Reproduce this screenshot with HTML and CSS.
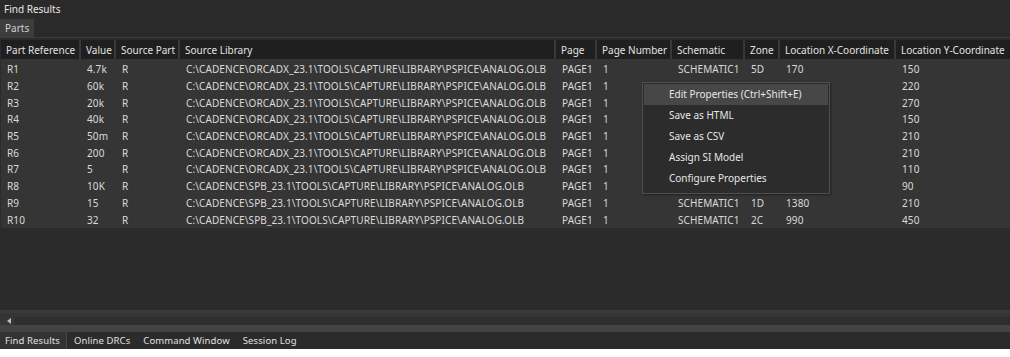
FILE: index.html
```html
<!DOCTYPE html>
<html lang="en">
<head>
    <meta charset="UTF-8">
    <title>Find Results</title>
    <link rel="stylesheet" href="styles.css">
</head>
<body>
    <div class="panel">
        <div class="title">Find Results</div>
        <div class="tabs">
            <div class="tab active">Parts</div>
        </div>
        <div class="grid-area">
            <table class="results">
                <colgroup>
                    <col style="width: 80px">
                    <col style="width: 35px">
                    <col style="width: 64px">
                    <col style="width: 376px">
                    <col style="width: 41px">
                    <col style="width: 75px">
                    <col style="width: 73px">
                    <col style="width: 35px">
                    <col style="width: 116px">
                    <col style="width: 114px">
                </colgroup>
                <thead>
                    <tr>
                        <th>Part Reference</th>
                        <th>Value</th>
                        <th>Source Part</th>
                        <th>Source Library</th>
                        <th>Page</th>
                        <th>Page Number</th>
                        <th>Schematic</th>
                        <th>Zone</th>
                        <th>Location X-Coordinate</th>
                        <th>Location Y-Coordinate</th>
                    </tr>
                </thead>
                <tbody id="rows"></tbody>
            </table>

            <div class="menu">
                <div class="item selected">Edit Properties (Ctrl+Shift+E)</div>
                <div class="item">Save as HTML</div>
                <div class="item">Save as CSV</div>
                <div class="item">Assign SI Model</div>
                <div class="item">Configure Properties</div>
            </div>
        </div>
        <div class="hscroll">
            <span class="arrow"></span>
            <div class="track"></div>
        </div>
        <div class="divider"></div>
        <div class="bottom-tabs">
            <div class="btab active">Find Results</div>
            <div class="btab">Online DRCs</div>
            <div class="btab">Command Window</div>
            <div class="btab">Session Log</div>
        </div>
    </div>

    <script>
        // rows of the Parts grid
        const orcad = 'C:\\CADENCE\\ORCADX_23.1\\TOOLS\\CAPTURE\\LIBRARY\\PSPICE\\ANALOG.OLB';
        const spb = 'C:\\CADENCE\\SPB_23.1\\TOOLS\\CAPTURE\\LIBRARY\\PSPICE\\ANALOG.OLB';
        const parts = [
            ['R1', '4.7k', orcad, 'SCHEMATIC1', '5D', '170', '150'],
            ['R2', '60k', orcad, '', '', '', '220'],
            ['R3', '20k', orcad, '', '', '', '270'],
            ['R4', '40k', orcad, '', '', '', '150'],
            ['R5', '50m', orcad, '', '', '', '210'],
            ['R6', '200', orcad, '', '', '', '210'],
            ['R7', '5', orcad, '', '', '', '110'],
            ['R8', '10K', spb, '', '', '', '90'],
            ['R9', '15', spb, 'SCHEMATIC1', '1D', '1380', '210'],
            ['R10', '32', spb, 'SCHEMATIC1', '2C', '990', '450']
        ];

        const tbody = document.getElementById('rows');
        parts.forEach(p => {
            const cells = [p[0], p[1], 'R', p[2], 'PAGE1', '1', p[3], p[4], p[5], p[6]];
            const tr = document.createElement('tr');
            cells.forEach(text => {
                const td = document.createElement('td');
                td.textContent = text;
                tr.appendChild(td);
            });
            tbody.appendChild(tr);
        });
    </script>
</body>
</html>
```

FILE: styles.css
```css
body {
    margin: 0;
    background: #ffffff;
    font-family: 'Noto Sans', sans-serif;
    font-size: 10px;
    color: #dcdcdc;
}
.panel {
    width: 1010px;
    height: 349px;
    background: #2e2e2e;
    display: flex;
    flex-direction: column;
}
.title {
    height: 19px;
    line-height: 19px;
    padding-left: 4px;
    background: #2a2a2a;
    color: #e6e6e6;
}
.tabs {
    display: flex;
    height: 18px;
    background: #2a2a2a;
}
.tab {
    padding: 0 5px;
    line-height: 18px;
    color: #d0d0d0;
}
.tab.active {
    background: #3d3d3d;
}
.grid-area {
    position: relative;
    flex: 1;
    background: #2b2b2b;
    padding: 2px 0 0 1px;
    border-top: 1px solid #3d3d3d;
}
.results {
    border-collapse: separate;
    border-spacing: 0;
    table-layout: fixed;
    width: 1009px;
}
.results th {
    background: #1f1f1f;
    font-weight: normal;
    text-align: left;
    height: 19px;
    padding: 0 0 0 5px;
    border-right: 2px solid #383838;
    color: #e2e2e2;
    white-space: nowrap;
    overflow: hidden;
}
.results th:last-child {
    border-right: none;
}
.results td {
    background: #353535;
    height: 16.7px;
    padding: 0 0 0 6px;
    white-space: nowrap;
    overflow: hidden;
    color: #dadada;
    line-height: 16px;
    letter-spacing: 0.1px;
}
.results tbody tr:first-child td {
    padding-top: 2px;
}
.menu {
    position: absolute;
    left: 642px;
    top: 44px;
    width: 184px;
    padding: 1px 1px 4px;
    background: #2c2c2c;
    border: 1px solid #4f4f4f;
    box-shadow: 1px 1px 2px rgba(0, 0, 0, 0.4);
}
.item {
    height: 21px;
    line-height: 20px;
    padding-left: 25px;
    color: #e6e6e6;
}
.item.selected {
    background: #474747;
}
.hscroll {
    display: flex;
    align-items: center;
    height: 12px;
    background: #353535;
    border-top: 3px solid #3a3a3a;
}
.arrow {
    width: 0;
    height: 0;
    margin: 3px 4px 0 7px;
    border-top: 3px solid transparent;
    border-bottom: 3px solid transparent;
    border-right: 4px solid #bdbdbd;
}
.track {
    flex: 1;
    height: 8px;
    margin-top: 3px;
    background: #2e2e2e;
}
.divider {
    height: 7px;
    background: #434343;
}
.bottom-tabs {
    display: flex;
    height: 17px;
    background: #2b2b2b;
    font-size: 9.5px;
}
.btab {
    padding: 0 6px 0 7px;
    line-height: 17px;
    color: #e0e0e0;
    letter-spacing: 0.1px;
}
.btab.active {
    padding: 0 6px 0 5px;
    background: #333333;
    border-right: 1px solid #474747;
}
```
